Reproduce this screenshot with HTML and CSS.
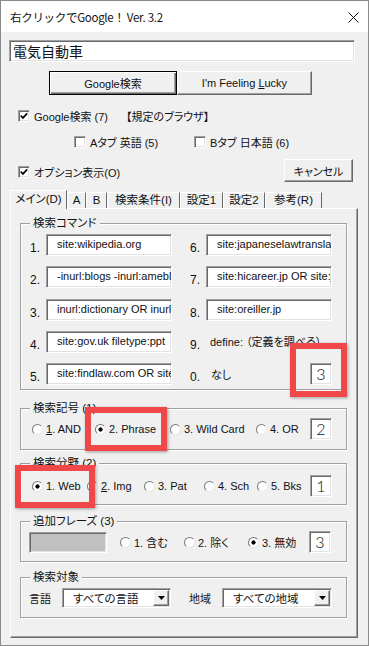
FILE: index.html
```html
<!DOCTYPE html>
<html lang="ja">
<head>
    <meta charset="UTF-8">
    <meta name="viewport" content="width=device-width, initial-scale=1.0">
    <title>右クリックでGoogle！ Ver. 3.2</title>
    <link rel="stylesheet" href="styles.css">
</head>
<body>
    <div class="window">
        <div class="titlebar">
            <span class="title">右クリックでGoogle！ Ver. 3.2</span>
            <svg class="close" width="11" height="11" viewBox="0 0 11 11">
                <path d="M0.5 0.5 L10.5 10.5 M10.5 0.5 L0.5 10.5" stroke="#111" stroke-width="1" fill="none"/>
            </svg>
        </div>

        <div class="client">
            <div class="textbox query">電気自動車</div>

            <div class="button-row">
                <button class="btn btn-default btn-search">Google検索</button>
                <button class="btn btn-lucky">I'm Feeling <u>L</u>ucky</button>
            </div>

            <div class="check-row row-google">
                <span class="check"><svg width="8" height="8" viewBox="0 0 8 8"><path d="M0.8 3.6 L3 5.9 L7.2 1.4" stroke="#000" stroke-width="1.7" fill="none"/></svg></span>
                <span>Google検索 (7)</span>
                <span class="browser">【規定のブラウザ】</span>
            </div>

            <div class="check-row row-tabs">
                <span class="check-item"><span class="check"></span>Aタブ 英語 (5)</span>
                <span class="check-item"><span class="check"></span>Bタブ 日本語 (6)</span>
            </div>

            <div class="option-row">
                <span class="check-item option-check"><span class="check"><svg width="8" height="8" viewBox="0 0 8 8"><path d="M0.8 3.6 L3 5.9 L7.2 1.4" stroke="#000" stroke-width="1.7" fill="none"/></svg></span>オプション表示(O)</span>
                <button class="btn btn-cancel">キャンセル</button>
            </div>

            <div class="tabs">
                <span class="tab tab-main active">メイン(D)</span>
                <span class="tab tab-a">A</span>
                <span class="tab tab-b">B</span>
                <span class="tab tab-cond">検索条件(I)</span>
                <span class="tab tab-set1">設定1</span>
                <span class="tab tab-set2">設定2</span>
                <span class="tab tab-ref">参考(R)</span>
            </div>

            <div class="panel">
                <fieldset class="group group-commands">
                    <legend>検索コマンド</legend>
                    <div class="cmd-grid">
                        <span class="num">1.</span>
                        <div class="textbox cmd">site:wikipedia.org</div>
                        <span class="num num-right">6.</span>
                        <div class="textbox cmd">site:japaneselawtranslation.go.jp</div>

                        <span class="num">2.</span>
                        <div class="textbox cmd">-inurl:blogs -inurl:ameblo.jp</div>
                        <span class="num num-right">7.</span>
                        <div class="textbox cmd">site:hicareer.jp OR site:jinzai</div>

                        <span class="num">3.</span>
                        <div class="textbox cmd">inurl:dictionary OR inurl:glossary</div>
                        <span class="num num-right">8.</span>
                        <div class="textbox cmd">site:oreiller.jp</div>

                        <span class="num">4.</span>
                        <div class="textbox cmd">site:gov.uk filetype:ppt</div>
                        <span class="num num-right">9.</span>
                        <div class="cmd-note">define: （定義を調べる）</div>

                        <span class="num">5.</span>
                        <div class="textbox cmd">site:findlaw.com OR site:law.com</div>
                        <span class="num num-right">0.</span>
                        <div class="cmd-none"><span>なし</span><div class="textbox count">3</div></div>
                    </div>
                </fieldset>

                <fieldset class="group group-symbol">
                    <legend>検索記号 (1)</legend>
                    <div class="choice-row">
                        <span class="radio-item"><span class="radio"></span><u>1</u>. AND</span>
                        <span class="radio-item"><span class="radio on"></span>2. Phrase</span>
                        <span class="radio-item"><span class="radio"></span>3. Wild Card</span>
                        <span class="radio-item"><span class="radio"></span>4. OR</span>
                        <div class="textbox count">2</div>
                    </div>
                </fieldset>

                <fieldset class="group group-field">
                    <legend>検索分野 (2)</legend>
                    <div class="choice-row">
                        <span class="radio-item"><span class="radio on"></span>1. Web</span>
                        <span class="radio-item"><span class="radio"></span><u>2</u>. Img</span>
                        <span class="radio-item"><span class="radio"></span>3. Pat</span>
                        <span class="radio-item"><span class="radio"></span>4. Sch</span>
                        <span class="radio-item"><span class="radio"></span>5. Bks</span>
                        <div class="textbox count">1</div>
                    </div>
                </fieldset>

                <fieldset class="group group-phrase">
                    <legend>追加フレーズ (3)</legend>
                    <div class="choice-row">
                        <div class="textbox phrase-box"></div>
                        <span class="radio-item"><span class="radio"></span>1. 含む</span>
                        <span class="radio-item"><span class="radio"></span>2. 除く</span>
                        <span class="radio-item"><span class="radio on"></span>3. 無効</span>
                        <div class="textbox count">3</div>
                    </div>
                </fieldset>

                <fieldset class="group group-target">
                    <legend>検索対象</legend>
                    <div class="choice-row">
                        <span>言語</span>
                        <div class="textbox select">
                            <span class="select-text">すべての言語</span>
                            <span class="drop-btn"><svg width="7" height="4" viewBox="0 0 7 4"><path d="M0 0 H7 L3.5 4 Z" fill="#000"/></svg></span>
                        </div>
                        <span></span>
                        <span>地域</span>
                        <div class="textbox select">
                            <span class="select-text">すべての地域</span>
                            <span class="drop-btn"><svg width="7" height="4" viewBox="0 0 7 4"><path d="M0 0 H7 L3.5 4 Z" fill="#000"/></svg></span>
                        </div>
                    </div>
                </fieldset>
            </div>
        </div>

        <!-- red annotation frames -->
        <div class="mark mark-count"></div>
        <div class="mark mark-phrase"></div>
        <div class="mark mark-web"></div>
    </div>
</body>
</html>
```

FILE: styles.css
```css
* {
    margin: 0;
    padding: 0;
    box-sizing: border-box;
}

body {
    background: #f0f0f0;
    font-family: "Liberation Sans", "Noto Sans CJK JP", sans-serif;
    font-size: 11px;
    color: #111;
    font-feature-settings: "palt";
}

.window {
    position: relative;
    width: 369px;
    height: 646px;
    border: 1px solid #8a8a8a;
    background: #f0f0f0;
    overflow: hidden;
}

.titlebar {
    height: 31px;
    background: #fff;
    display: flex;
    align-items: center;
    justify-content: space-between;
    padding: 1px 9px 0 9px;
}

.title {
    font-family: "Noto Sans CJK JP", sans-serif;
    font-size: 11.5px;
    font-feature-settings: normal;
    letter-spacing: -0.3px;
}

.client {
    padding: 8px 8px 0;
}

/* sunken edit box */
.textbox {
    background: #fff;
    border: 1px solid;
    border-color: #a0a0a0 #fff #fff #a0a0a0;
    box-shadow: inset 1px 1px 0 #696969, inset -1px -1px 0 #e3e3e3;
    white-space: nowrap;
    overflow: hidden;
}

.query {
    width: 346px;
    height: 22px;
    padding-left: 3px;
    font-family: "Noto Sans CJK JP", sans-serif;
    font-size: 14px;
    line-height: 20px;
}

/* raised buttons */
.btn {
    font: inherit;
    color: #111;
    background: #f0f0f0;
    border: 1px solid;
    border-color: #fff #696969 #696969 #fff;
    box-shadow: inset -1px -1px 0 #a0a0a0;
    height: 24px;
}

.btn-default {
    border-color: #000;
    box-shadow: inset 1px 1px 0 #fff, inset -1px -1px 0 #696969, inset -2px -2px 0 #a0a0a0;
}

.button-row {
    display: flex;
    margin-top: 9px;
    padding-left: 40px;
}

.btn-search {
    width: 128px;
}

.btn-lucky {
    width: 135px;
}

.check-row {
    display: flex;
    align-items: center;
    height: 14px;
}

.row-google {
    margin-top: 14px;
    padding-left: 9px;
}

.browser {
    margin-left: 18px;
}

.row-tabs {
    display: grid;
    grid-template-columns: 120px auto;
    margin-top: 11px;
    padding-left: 65px;
}

.check-item {
    display: flex;
    align-items: center;
    white-space: nowrap;
}

.check {
    width: 12px;
    height: 12px;
    flex: none;
    margin-right: 4px;
    display: flex;
    align-items: center;
    justify-content: center;
    background: #fff;
    border: 1px solid;
    border-color: #a0a0a0 #fff #fff #a0a0a0;
    box-shadow: inset 1px 1px 0 #696969, inset -1px -1px 0 #e3e3e3;
}

.option-row {
    display: flex;
    align-items: center;
    height: 23px;
    margin-top: 11px;
    padding-left: 9px;
}

.option-check {
    margin-top: 3px;
}

.btn-cancel {
    margin-left: auto;
    margin-right: 7px;
    width: 69px;
    height: 23px;
}

/* tab strip */
.tabs {
    display: flex;
    align-items: flex-end;
    height: 19px;
    margin: 8px 0 -1px 1px;
    position: relative;
    z-index: 1;
}

.tab {
    flex: none;
    height: 16px;
    margin-bottom: 1px;
    line-height: 14px;
    text-align: center;
    white-space: nowrap;
    font-size: 11.5px;
    border-top: 1px solid #fff;
    border-left: 1px solid #fff;
    border-right: 1px solid #696969;
}

.tab.active {
    height: 19px;
    margin-bottom: 0;
    line-height: 17px;
    background: #f0f0f0;
}

.tab-main { width: 57px; }
.tab-a { width: 19px; }
.tab-b { width: 21px; }
.tab-cond { width: 73px; }
.tab-set1 { width: 43px; }
.tab-set2 { width: 42px; }
.tab-ref { width: 57px; }

.panel {
    margin-left: 1px;
    width: 348px;
    height: 430px;
    padding: 7px 0 0 9px;
    border: 1px solid;
    border-color: #fff #696969 #696969 #fff;
    box-shadow: inset -1px -1px 0 #a0a0a0;
}

/* etched group boxes */
.group {
    width: 327px;
    min-width: 0;
    border: 1px solid #a0a0a0;
    box-shadow: inset 1px 1px 0 #fff, 1px 1px 0 #fff;
}

.group legend {
    padding: 0 3px;
    line-height: 15px;
    font-size: 11.5px;
    background: #f0f0f0;
}

.group-commands {
    padding: 3px 0 4px 9px;
}

.group-symbol {
    margin-top: 11px;
    padding: 1px 0 8px 11px;
}

.group-symbol legend {
    margin-left: -2px;
}

.group-field {
    margin-top: 6px;
    padding: 3px 0 6px 11px;
}

.group-field legend {
    margin-left: -2px;
}

.group-phrase {
    margin-top: 9px;
    padding: 1px 0 7px 8px;
}

.group-phrase legend,
.group-target legend {
    margin-left: 1px;
}

.group-target {
    margin-top: 8px;
    padding: 1px 0 7px 8px;
}

.cmd-grid {
    display: grid;
    grid-template-columns: 16px 126px 18px 16px 126px;
    grid-auto-rows: 22px;
    row-gap: 10.25px;
}

.num {
    font-size: 12px;
    padding-top: 5px;
    line-height: 18px;
}

.num-right {
    grid-column: 4;
}

.cmd {
    height: 22px;
    padding-left: 10px;
    line-height: 19px;
}

.cmd-note {
    padding-left: 4px;
    line-height: 22px;
    white-space: nowrap;
}

.cmd-none {
    display: flex;
    align-items: center;
    justify-content: space-between;
    padding-left: 5px;
}

.count {
    width: 22px;
    height: 22px;
    text-align: center;
    font-family: Lato, "Liberation Sans", sans-serif;
    font-weight: 300;
    font-size: 16px;
    line-height: 20px;
}

.choice-row {
    display: grid;
    align-items: center;
    height: 24px;
}

.group-symbol .choice-row {
    grid-template-columns: 63px 75px 86px 54px 22px;
}

.group-field .choice-row {
    grid-template-columns: 55px 57px 60px 53px 53px 22px;
}

.group-phrase .choice-row {
    grid-template-columns: 91px 64px 64px 61px 22px;
}

.group-target .choice-row {
    grid-template-columns: 33px 109px 18px 33px 110px;
}

.radio-item {
    display: flex;
    align-items: center;
    white-space: nowrap;
}

.radio {
    width: 11px;
    height: 11px;
    flex: none;
    margin-right: 3px;
    border-radius: 50%;
    background: #fff;
    border: 1px solid;
    border-color: #7a7a7a #e8e8e8 #e8e8e8 #7a7a7a;
}

.radio.on {
    background: radial-gradient(circle, #000 0 1.8px, #fff 2.4px);
}

.phrase-box {
    width: 78px;
    height: 21px;
    background: #c0c0c0;
}

.select {
    display: flex;
    align-items: center;
    height: 20px;
    padding: 1px 1px 1px 0;
}

.select-text {
    flex: 1;
    padding-left: 10px;
    font-size: 11.5px;
}

.drop-btn {
    width: 16px;
    height: 16px;
    display: flex;
    align-items: center;
    justify-content: center;
    background: #f0f0f0;
    border: 1px solid;
    border-color: #fff #696969 #696969 #fff;
    box-shadow: inset -1px -1px 0 #a0a0a0;
}

/* red annotation frames */
.mark {
    position: absolute;
    border: 6px solid #f04848;
    box-shadow: 1px 1px 3px rgba(0, 0, 0, 0.35);
}

.mark-count {
    left: 289px;
    top: 342px;
    width: 57px;
    height: 54px;
}

.mark-phrase {
    left: 84px;
    top: 406px;
    width: 82px;
    height: 44px;
}

.mark-web {
    left: 14px;
    top: 464px;
    width: 80px;
    height: 43px;
}
```
